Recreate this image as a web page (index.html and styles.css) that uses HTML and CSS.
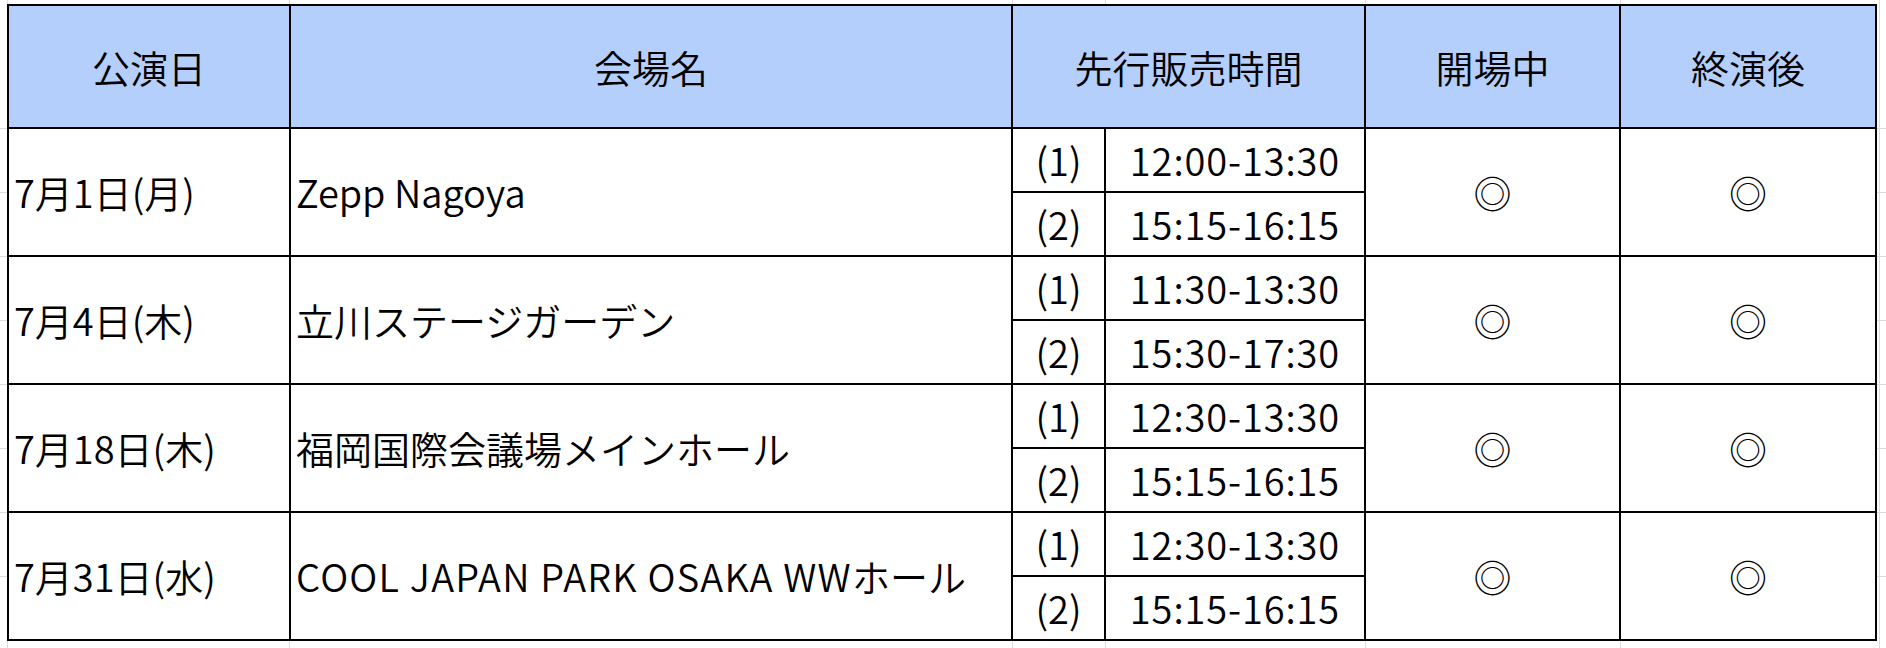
FILE: index.html
```html
<!DOCTYPE html>
<html lang="ja">
<head>
<meta charset="utf-8">
<title>先行販売時間</title>
<link rel="stylesheet" href="styles.css">
</head>
<body>
<div class="sheet">
  <div class="table">
    <div class="cell head">公演日</div>
    <div class="cell head">会場名</div>
    <div class="cell head span2">先行販売時間</div>
    <div class="cell head">開場中</div>
    <div class="cell head">終演後</div>

    <div class="cell date">7月1日(月)</div>
    <div class="cell venue">Zepp Nagoya</div>
    <div class="cell num">(1)</div>
    <div class="cell time">12:00-13:30</div>
    <div class="cell mark">◎</div>
    <div class="cell mark">◎</div>
    <div class="cell num">(2)</div>
    <div class="cell time">15:15-16:15</div>

    <div class="cell date">7月4日(木)</div>
    <div class="cell venue">立川ステージガーデン</div>
    <div class="cell num">(1)</div>
    <div class="cell time">11:30-13:30</div>
    <div class="cell mark">◎</div>
    <div class="cell mark">◎</div>
    <div class="cell num">(2)</div>
    <div class="cell time">15:30-17:30</div>

    <div class="cell date">7月18日(木)</div>
    <div class="cell venue">福岡国際会議場メインホール</div>
    <div class="cell num">(1)</div>
    <div class="cell time">12:30-13:30</div>
    <div class="cell mark">◎</div>
    <div class="cell mark">◎</div>
    <div class="cell num">(2)</div>
    <div class="cell time">15:15-16:15</div>

    <div class="cell date">7月31日(水)</div>
    <div class="cell venue"><span class="caps">COOL JAPAN PARK OSAKA WW</span>ホール</div>
    <div class="cell num">(1)</div>
    <div class="cell time">12:30-13:30</div>
    <div class="cell mark">◎</div>
    <div class="cell mark">◎</div>
    <div class="cell num">(2)</div>
    <div class="cell time">15:15-16:15</div>
  </div>
</div>
</body>
</html>
```
FILE: styles.css
```css
html, body {
  margin: 0;
  padding: 0;
  background: #ffffff;
}

.sheet {
  width: 1886px;
  height: 648px;
  padding: 4px 0 0 7px;
  box-sizing: border-box;
  background-color: #ffffff;
  background-image:
    linear-gradient(#dcdcdc, #dcdcdc),
    linear-gradient(#dcdcdc, #dcdcdc),
    linear-gradient(#dcdcdc, #dcdcdc),
    linear-gradient(#dcdcdc, #dcdcdc),
    linear-gradient(#dcdcdc, #dcdcdc),
    linear-gradient(#dcdcdc, #dcdcdc),
    linear-gradient(#dcdcdc, #dcdcdc),
    linear-gradient(#dcdcdc, #dcdcdc),
    linear-gradient(#dcdcdc, #dcdcdc),
    linear-gradient(#dcdcdc, #dcdcdc),
    linear-gradient(#dcdcdc, #dcdcdc),
    linear-gradient(#dcdcdc, #dcdcdc),
    linear-gradient(#dcdcdc, #dcdcdc),
    linear-gradient(#dcdcdc, #dcdcdc),
    linear-gradient(#dcdcdc, #dcdcdc);
  background-repeat: no-repeat;
  background-size:
    1px 100%, 1px 100%, 1px 100%, 1px 100%, 1px 100%, 1px 100%, 1px 100%,
    100% 1px, 100% 1px, 100% 1px, 100% 1px, 100% 1px, 100% 1px, 100% 1px, 100% 1px;
  background-position:
    289px 0, 1012px 0, 1105px 0, 1365px 0, 1620px 0, 1879px 0, 7px 0,
    0 128px, 0 192px, 0 256px, 0 320px, 0 384px, 0 448px, 0 512px, 0 576px;
}

.table {
  display: grid;
  grid-template-columns: 280px 720px 91px 258px 253px 254px;
  grid-template-rows: 121px repeat(8, 62px);
  gap: 2px;
  padding: 2px;
  width: max-content;
  background: #000000;
  font-family: "Noto Sans CJK JP", "Noto Sans", sans-serif;
  font-size: 38px;
  font-weight: 350;
  color: #000000;
}

.cell {
  background: #ffffff;
  display: flex;
  align-items: center;
  justify-content: center;
  white-space: nowrap;
  line-height: 1;
}

.head {
  background: #b4cffb;
}

.span2 {
  grid-column: span 2;
}

.date,
.venue {
  grid-row: span 2;
  justify-content: flex-start;
  padding-left: 5px;
}

.caps {
  letter-spacing: 1.2px;
}

.time {
  letter-spacing: 0.9px;
}

.mark {
  grid-row: span 2;
}
```
